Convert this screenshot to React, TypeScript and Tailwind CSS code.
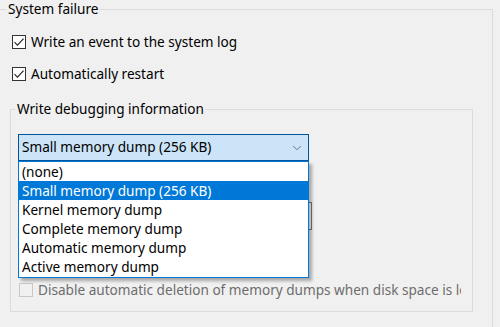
import { ChevronDown } from "lucide-react";

const options = [
  "(none)",
  "Small memory dump (256 KB)",
  "Kernel memory dump",
  "Complete memory dump",
  "Automatic memory dump",
  "Active memory dump",
];

function CheckBox({ checked, disabled }: { checked?: boolean; disabled?: boolean }) {
  return (
    <span
      className={`flex w-[14px] h-[14px] shrink-0 items-center justify-center border ${
        disabled ? "border-[#c8c8c8] bg-[#f0f0f0]" : "border-[#333333] bg-white"
      }`}
    >
      {checked && (
        <svg width="12" height="12" viewBox="0 0 12 12" fill="none">
          <path d="M1.5 6.2 L4.4 9.1 L10.6 2.6" stroke="#222" strokeWidth="1.1" />
        </svg>
      )}
    </span>
  );
}

export default function App() {
  return (
    <div
      className="w-[500px] h-[327px] overflow-hidden bg-[#f0f0f0] text-[13.6px] text-black"
      style={{ fontFamily: '"Segoe UI", "Noto Sans", sans-serif' }}
    >
      {/* System failure group */}
      <fieldset className="ml-[-2px] w-[495px] h-[360px] border border-[#dcdcdc]">
        <legend className="ml-[7px] px-[2px] leading-[18px]">System failure</legend>

        <label className="mt-[14px] ml-[13px] flex h-[20px] items-center gap-[5px]">
          <CheckBox checked />
          <span>Write an event to the system log</span>
        </label>
        <label className="mt-[12px] ml-[13px] flex h-[20px] items-center gap-[5px]">
          <CheckBox checked />
          <span>Automatically restart</span>
        </label>

        {/* Write debugging information group */}
        <fieldset className="mt-[16px] ml-[11px] w-[463px] h-[212px] border border-[#dcdcdc]">
          <legend className="ml-[4px] px-[2px] leading-[18px]">Write debugging information</legend>

          <div className="relative mt-[16px] ml-[7px] w-[291px]">
            <div className="flex h-[27px] items-center justify-between border border-[#005499] bg-[#cce4f7] pl-[3px] pr-[4px]">
              <span>Small memory dump (256 KB)</span>
              <ChevronDown size={14} strokeWidth={1.3} color="#555" />
            </div>

            {/* open dropdown list */}
            <div className="absolute left-0 top-full z-10 w-[291px] border border-[#0078d7] bg-white shadow-[3px_3px_3px_rgba(0,0,0,0.3)]">
              {options.map((o, i) => (
                <div
                  key={o}
                  className={`h-[19px] pl-[3px] leading-[19px] ${
                    i === 1 ? "bg-[#0078d7] text-white" : ""
                  }`}
                >
                  {o}
                </div>
              ))}
              <div className="h-[1px]" />
            </div>
          </div>

          {/* dump file box, mostly hidden under the list */}
          <div className="mt-[41px] ml-[7px] w-[294px] h-[28px] border border-[#7a7a7a] bg-white" />

          <label className="mt-[50px] ml-[8px] flex h-[20px] w-[442px] items-center gap-[5px] overflow-hidden whitespace-nowrap text-[#6d6d6d]">
            <CheckBox disabled />
            <span>Disable automatic deletion of memory dumps when disk space is low</span>
          </label>
        </fieldset>
      </fieldset>
    </div>
  );
}
